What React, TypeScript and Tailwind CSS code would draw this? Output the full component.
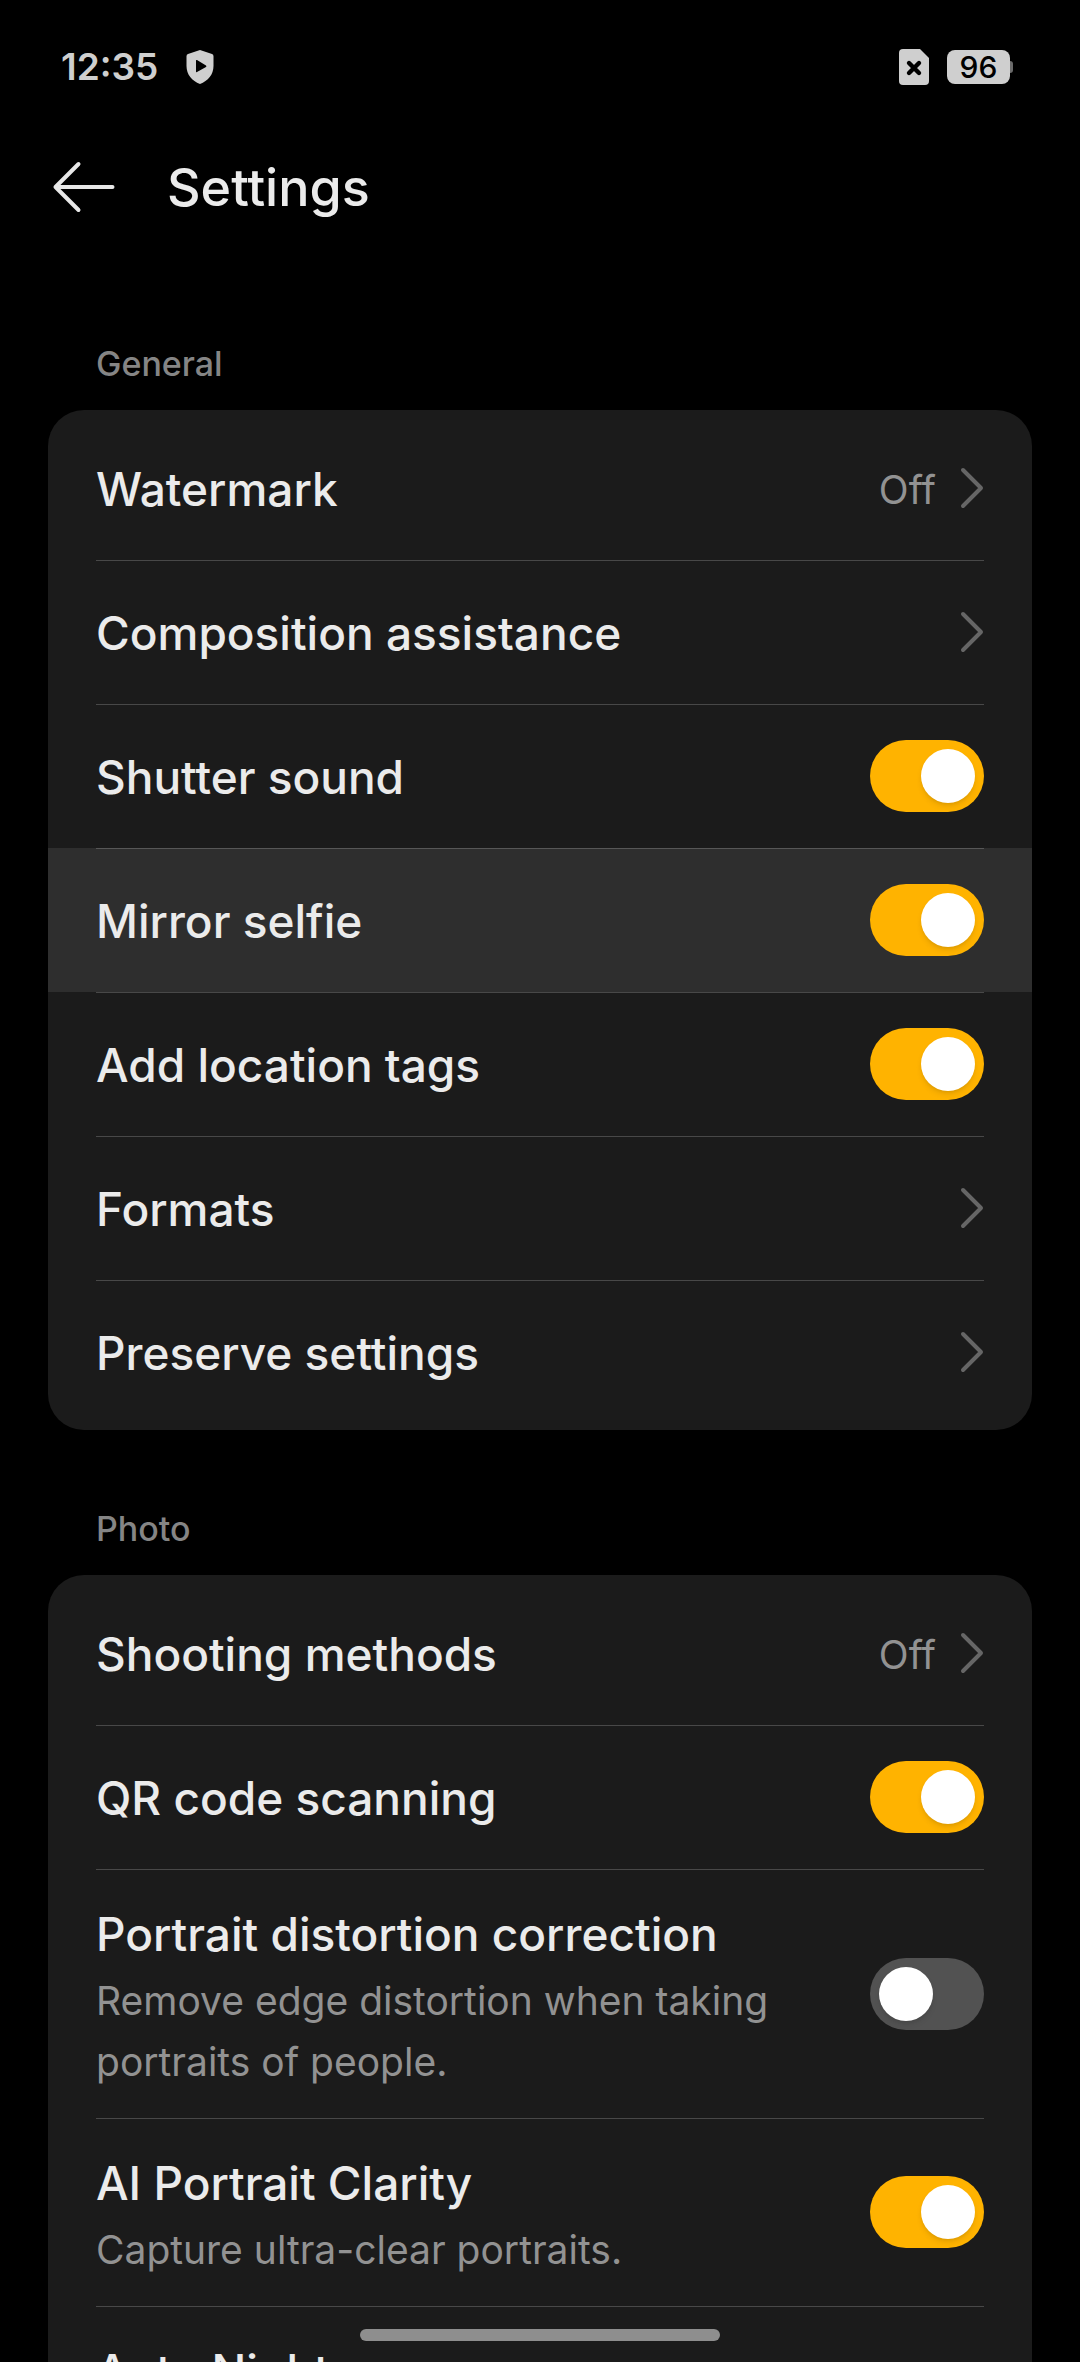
import { useState } from "react";

type Item = {
  id: string;
  label: string;
  // a string gives a link row, a boolean gives a switch row
  value: string | boolean;
  description?: string;
  active?: boolean;
};

const generalItems: Item[] = [
  { id: "watermark", label: "Watermark", value: "Off" },
  { id: "composition", label: "Composition assistance", value: "" },
  { id: "shutter-sound", label: "Shutter sound", value: true },
  { id: "mirror-selfie", label: "Mirror selfie", value: true, active: true },
  { id: "location-tags", label: "Add location tags", value: true },
  { id: "formats", label: "Formats", value: "" },
  { id: "preserve", label: "Preserve settings", value: "" }
];

const photoItems: Item[] = [
  { id: "shooting-methods", label: "Shooting methods", value: "Off" },
  { id: "qr-code", label: "QR code scanning", value: true },
  {
    id: "portrait-distortion",
    label: "Portrait distortion correction",
    value: false,
    description: "Remove edge distortion when taking portraits of people."
  },
  {
    id: "portrait-clarity",
    label: "AI Portrait Clarity",
    value: true,
    description: "Capture ultra-clear portraits."
  },
  { id: "auto-night", label: "Auto Night", value: true, description: "" }
];

const StatusBar = () => (
  <div className="flex items-center justify-between h-[134px] pl-[61px] pr-[67px] shrink-0">
    <div className="flex items-center gap-7">
      <span className="text-[37px] leading-[48px] font-semibold text-[#cfcfcf]">12:35</span>
      <svg width="28" height="34" viewBox="0 0 28 34" aria-hidden="true">
        <path
          fill="#cfcfcf"
          fillRule="evenodd"
          d="M14 0 L26 4 Q27.5 4.6 27.5 6.2 V16 C27.5 24.5 22 31 14 34 C6 31 0.5 24.5 0.5 16 V6.2 Q0.5 4.6 2 4 Z M10 10.6 V21.6 Q10 22.6 11 22.1 L20 16.9 Q20.9 16.2 20 15.5 L11 10.1 Q10 9.6 10 10.6 Z"
        />
      </svg>
    </div>
    <div className="flex items-center gap-[18px]">
      <svg width="30" height="36" viewBox="0 0 30 36" aria-hidden="true">
        <path fill="#cfcfcf" d="M4 0 H21 L30 9 V32 Q30 36 26 36 H4 Q0 36 0 32 V4 Q0 0 4 0 Z" />
        <path d="M10 14 L20 24 M20 14 L10 24" stroke="#000" strokeWidth="4.4" strokeLinecap="round" />
      </svg>
      <div className="flex items-center">
        <span className="flex items-center justify-center w-[63px] h-[34px] rounded-lg bg-[#cfcfcf] text-black text-[30px] leading-[34px] font-medium">
          96
        </span>
        <span className="w-[3px] h-3 rounded-r-sm bg-[#6b6b6b]" />
      </div>
    </div>
  </div>
);

const Chevron = () => (
  <svg width="24" height="42" viewBox="0 0 24 42" fill="none" aria-hidden="true">
    <path d="M3 3 L21 21 L3 39" stroke="#666666" strokeWidth="4" strokeLinecap="round" strokeLinejoin="round" />
  </svg>
);

const Row = ({ item, first }: { item: Item; first: boolean }) => {
  const [on, setOn] = useState(item.value === true);
  const isSwitch = typeof item.value === "boolean";
  const hasDescription = item.description !== undefined;

  const inner = `flex items-center justify-between w-full text-left ${
    first ? "" : "shadow-[inset_0_1px_0_#ffffff33]"
  } ${hasDescription ? "" : "h-36"}`;

  return (
    <li className={`px-12 ${item.active ? "bg-[#2e2e2e]" : ""}`}>
      {isSwitch ? (
        <div className={inner}>
          <div className={`flex-1 pr-12 ${hasDescription ? "pt-[33px] pb-[26px]" : "pt-0.5"}`}>
            <label htmlFor={item.id} className="block text-[46px] leading-[64px] font-medium text-[#ebebeb]">
              {item.label}
            </label>
            {hasDescription && (
              <p className="mt-1 min-h-[61px] text-[39px] leading-[61px] text-[#929292]">{item.description}</p>
            )}
          </div>
          <input
            id={item.id}
            type="checkbox"
            role="switch"
            checked={on}
            onChange={() => setOn(!on)}
            className="appearance-none shrink-0 flex items-center w-[114px] h-[72px] px-[9px] rounded-full cursor-pointer bg-[#525252] checked:bg-[#ffb300] checked:justify-end before:content-[''] before:w-[54px] before:h-[54px] before:rounded-full before:bg-white before:shadow-md"
          />
        </div>
      ) : (
        <button type="button" className={inner}>
          <span className="pt-0.5 text-[46px] leading-[64px] font-medium text-[#ebebeb]">{item.label}</span>
          <span className="flex items-center gap-6 text-[#929292]">
            <span className="pt-0.5 text-[39px] leading-[61px]">{item.value}</span>
            <Chevron />
          </span>
        </button>
      )}
    </li>
  );
};

const Section = ({ title, items }: { title: string; items: Item[] }) => (
  <section className="px-12">
    <h2 className="px-12 mb-5 text-[34px] leading-[52px] font-medium text-[#858585]">{title}</h2>
    <ul className="py-[6px] rounded-[36px] bg-[#1b1b1b]">
      {items.map((item, index) => (
        <Row key={item.id} item={item} first={index === 0} />
      ))}
    </ul>
  </section>
);

const App = () => {
  return (
    <div
      className="flex flex-col h-screen bg-black overflow-hidden"
      style={{ fontFamily: "Inter, 'Open Sans', sans-serif" }}
    >
      <StatusBar />

      <header className="flex items-center gap-[51px] h-[108px] px-[52px] shrink-0">
        <button type="button" aria-label="Back">
          <svg width="64" height="54" viewBox="0 0 64 54" fill="none" className="block">
            <path
              d="M26.5 3 L3.5 26 L26.5 49 M3.5 26 H60.5"
              stroke="#e8e8e8"
              strokeWidth="4"
              strokeLinecap="round"
              strokeLinejoin="round"
            />
          </svg>
        </button>
        <h1 className="text-[52px] leading-[64px] font-medium text-[#ebebeb]">Settings</h1>
      </header>

      {/* Scrollable list */}
      <main className="flex flex-col gap-[73px] flex-1 min-h-0 pt-24 overflow-y-auto [scrollbar-width:none]">
        <Section title="General" items={generalItems} />
        <Section title="Photo" items={photoItems} />
      </main>

      {/* Gesture bar */}
      <div className="fixed bottom-[21px] left-1/3 w-1/3 h-3 rounded-full bg-[#8e8e8e]" />
    </div>
  );
};

export default App;
